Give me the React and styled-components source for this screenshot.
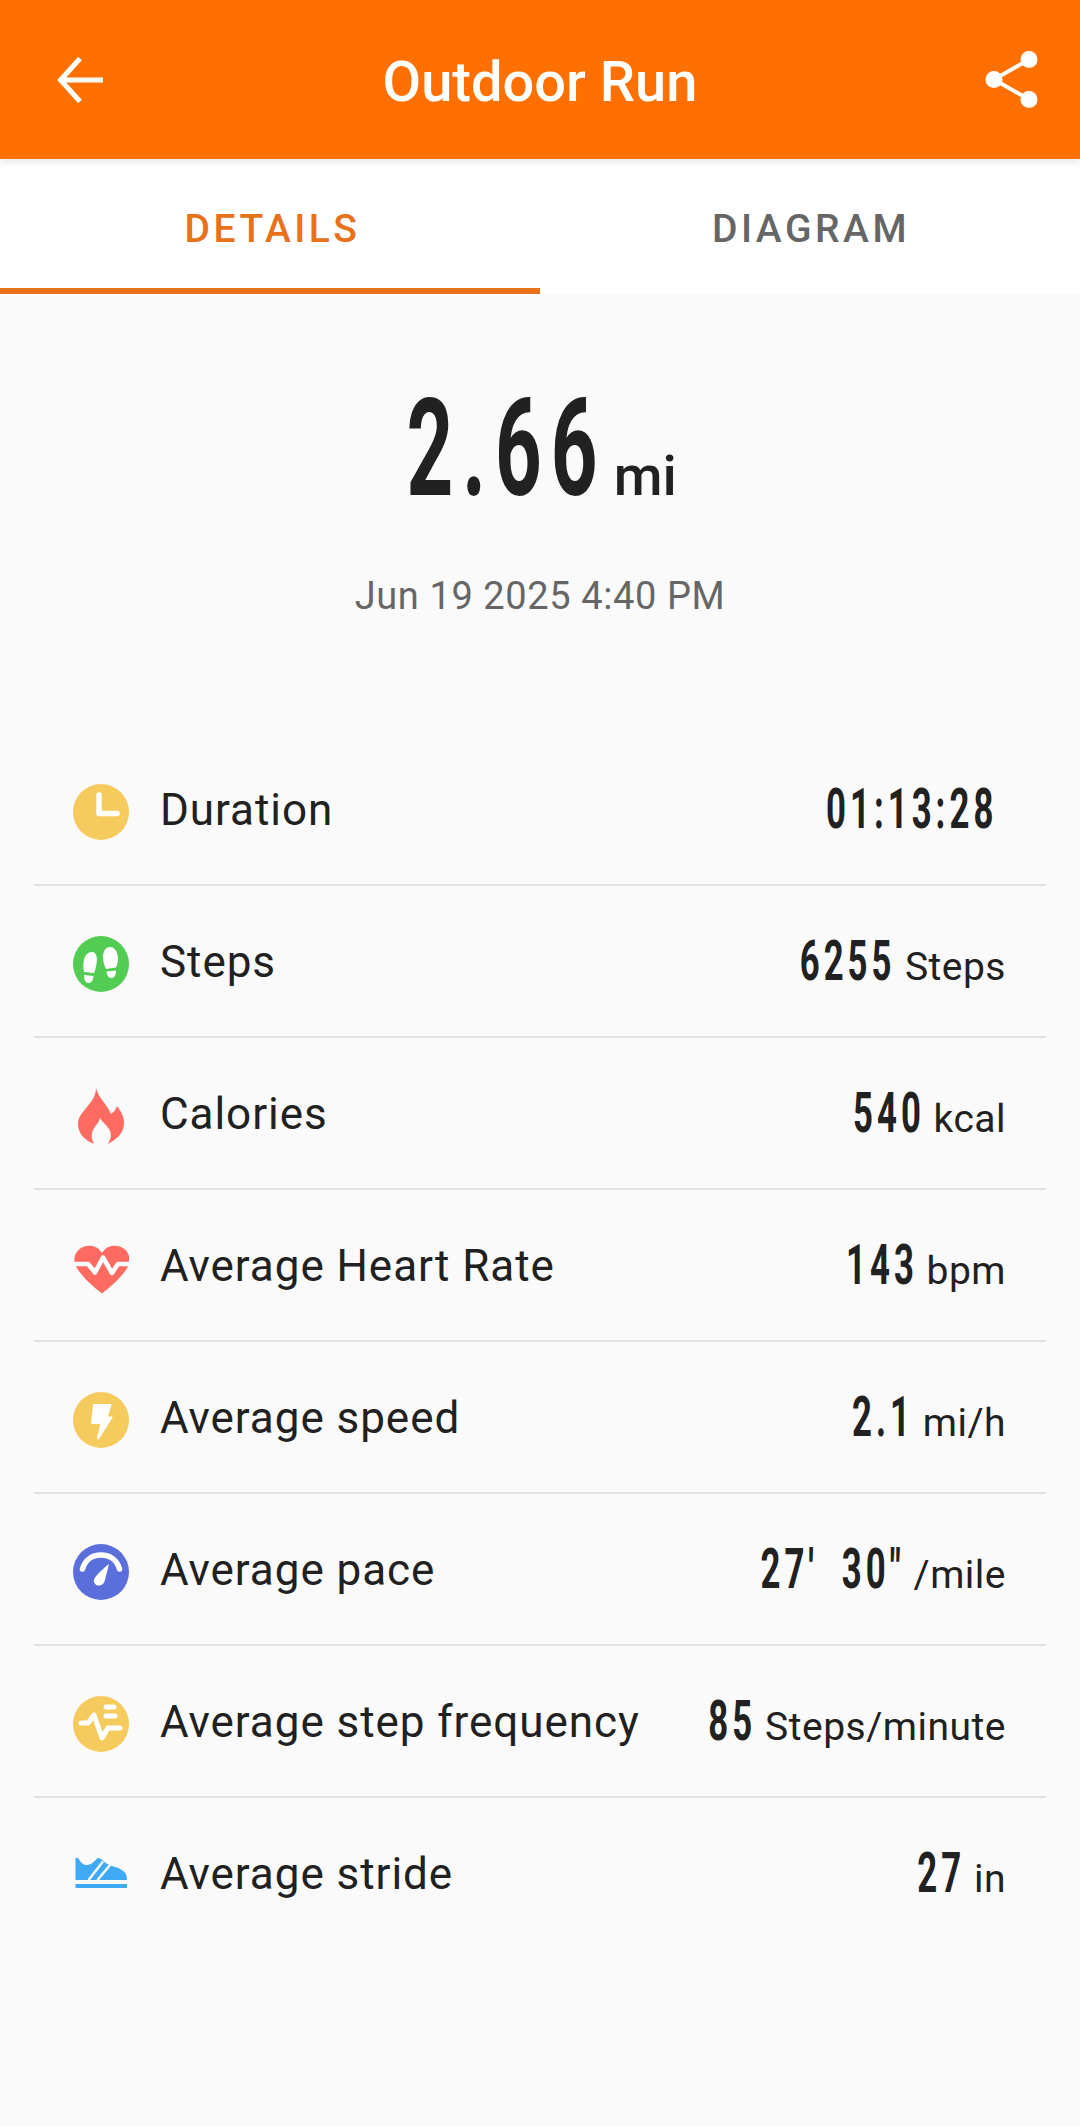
import React from "react";
import styled, { createGlobalStyle } from "styled-components";

const Global = createGlobalStyle`
  html, body { margin: 0; padding: 0; background: #fafafa; }
  body { font-family: Roboto, "Liberation Sans", sans-serif; -webkit-font-smoothing: antialiased; }
`;

const Page = styled.div`
  width: 1080px;
  height: 2126px;
  background: #fafafa;
  overflow: hidden;
  display: flex;
  flex-direction: column;
`;

const Header = styled.header`
  height: 159px;
  flex: none;
  background: #ff7000;
  display: flex;
  align-items: center;
  justify-content: space-between;
  padding: 0 42px 0 57px;
  box-shadow: 0 2px 8px rgba(0, 0, 0, 0.12);
  position: relative;
  z-index: 1;
  box-sizing: border-box;
`;

const Title = styled.h1`
  margin: 0 0 0 -8px;
  font-size: 56px;
  font-weight: 500;
  color: #fff;
  line-height: 1;
  padding-top: 5px;
`;

const Tabs = styled.nav`
  height: 135px;
  flex: none;
  display: grid;
  grid-template-columns: 1fr 1fr;
  background: #fff;
`;

const Tab = styled.div`
  display: flex;
  align-items: center;
  justify-content: center;
  box-sizing: border-box;
  padding-top: 10px;
  padding-left: ${(p) => (p.$active ? "5px" : "2px")};
  font-size: 39px;
  font-weight: 500;
  letter-spacing: 3.5px;
  color: ${(p) => (p.$active ? "#e8711a" : "#666666")};
  border-bottom: 6px solid ${(p) => (p.$active ? "#e8711a" : "transparent")};
`;

const Hero = styled.section`
  height: 440px;
  flex: none;
  box-sizing: border-box;
  padding-top: 82px;
  display: flex;
  flex-direction: column;
  align-items: center;
`;

const HeroValue = styled.div`
  display: flex;
  align-items: baseline;
  height: 146px;
  color: #212121;
`;

const Condensed = styled.span`
  display: inline-block;
  font-weight: 700;
  white-space: pre;
  transform-origin: right bottom;
  transform: scaleX(0.62);
`;

const HeroNumber = styled(Condensed)`
  font-size: 136px;
  line-height: 146px;
  letter-spacing: 15px;
  margin-left: -130px;
  transform: scaleX(0.6);
`;

const HeroUnit = styled.span`
  font-size: 56px;
  font-weight: 500;
  margin-left: 7px;
`;

const DateText = styled.div`
  font-size: 38px;
  color: #666666;
  margin-top: 52px;
  letter-spacing: 0.6px;
`;

const List = styled.ul`
  list-style: none;
  margin: 0;
  padding: 0 34px;
`;

const Row = styled.li`
  height: 152px;
  box-sizing: border-box;
  display: flex;
  align-items: center;
  border-bottom: 2px solid ${(p) => (p.$last ? "transparent" : "#e2e2e2")};
  padding: 0 40px 0 39px;
`;

const IconBox = styled.svg`
  width: 56px;
  height: 56px;
  flex: none;
  margin: 5px 31px 0 0;
`;

const Label = styled.span`
  font-size: 44px;
  color: #212121;
  letter-spacing: 0.95px;
  white-space: nowrap;
  padding-top: 2px;
`;

const Value = styled.span`
  margin-left: auto;
  display: flex;
  align-items: baseline;
  color: #212121;
  white-space: nowrap;
  margin-right: ${(p) => (p.$pad ? "9px" : "0")};
`;

const Number = styled(Condensed)`
  font-size: 56px;
  letter-spacing: 6.5px;
  margin-left: -70px;
`;

const Unit = styled.span`
  font-size: 39px;
  margin-left: 9px;
  letter-spacing: 0.5px;
`;

const Back = () => (
  <svg width="46" height="46" viewBox="0 0 46 46" fill="none" stroke="#fff" strokeWidth="5">
    <path d="M23 1.500 L3.500 23 L23 44.500 M3.500 23 H46" />
  </svg>
);

const Share = () => (
  <svg width="53" height="57" viewBox="0 0 53 57" fill="#fff" stroke="none">
    <circle cx="44" cy="8.500" r="8.500" />
    <circle cx="9" cy="28.500" r="8.500" />
    <circle cx="44" cy="48.500" r="8.500" />
    <path d="M44 8.500 L9 28.500 L44 48.500" fill="none" stroke="#fff" strokeWidth="4" />
  </svg>
);

const icons = {
  clock: (
    <>
      <circle cx="28" cy="28" r="28" fill="#f6cb5e" />
      <path d="M26 11 V29.500 H44" fill="none" stroke="#fff" strokeWidth="5.500" strokeLinecap="round" strokeLinejoin="round" />
    </>
  ),
  steps: (
    <>
      <circle cx="28" cy="28" r="28" fill="#52cc52" />
      <g fill="#fff">
        <path d="M19 16 C24 16 25 24 23 30 C22.500 33 22 35 21 37 L11 36 C10 31 10 28 11 24 C12 19 15 16 19 16 Z" />
        <path d="M11 39 L20.500 40 C20 45 18 47 15.500 47 C12.500 47 11 44 11 39 Z" />
        <path d="M37 11 C33 11 30 15 30 21 C30 25 31 29 33 33 L43 31.500 C45 27 45.500 23 44.500 19 C43.500 14 41 11 37 11 Z" />
        <path d="M33.500 35.500 L43 34.500 C43 39 41.500 42 38.500 42 C36 42 34 40 33.500 35.500 Z" />
      </g>
    </>
  ),
  flame: (
    <path fill="#ff6b60" d="M23 0 C25 8 30 12 34 19 C36 22 37 24 38 26 C41 24 43 21 44 18 C48 23 51 29 51 35 C51 45 44 51 35 56 C37 52 39 48 37 43 C35 38 30 35 27 30 C26 36 20 39 19 45 C18 49 19 52 21 56 C11 52 5 45 5 36 C5 29 9 25 14 19 C18 14 23 8 23 0 Z" />
  ),
  heart: (
    <g transform="translate(0 -1)">
      <path fill="#ff6b60" d="M29 14 C25 7 17 5 10 8 C3 11 0 18 2 25 C5 34 19 47 29 54.500 C39 47 53 34 56 25 C58 18 55 11 48 8 C41 5 33 7 29 14 Z" />
      <path fill="none" stroke="#fff" strokeWidth="4.500" strokeLinejoin="round" strokeLinecap="round" d="M2 25 H15 L22 33.500 L30 18.500 L39 34 L45 25 H56" />
    </g>
  ),
  bolt: (
    <>
      <circle cx="28" cy="28" r="28" fill="#f6cb5e" />
      <path fill="#fff" stroke="#fff" strokeWidth="2" strokeLinejoin="round" d="M21 13 H37.500 L33.500 25.500 H38.500 L25 46.500 L28.500 31 H19 Z" />
    </>
  ),
  gauge: (
    <>
      <circle cx="28" cy="28" r="28" fill="#5a6fdb" />
      <path d="M9.500 25 C12 16 19 11 28 11 C37 11 44 16 46.500 25" fill="none" stroke="#fff" strokeWidth="5.500" strokeLinecap="round" />
      <path fill="#fff" d="M36 20 L32 36 C31 40 28 42 25 41.500 C21.500 41 20 37.500 21.500 34.500 C24 30 31 24 36 20 Z" />
    </>
  ),
  pulse: (
    <>
      <circle cx="28" cy="28" r="28" fill="#f6cb5e" />
      <g fill="none" stroke="#fff" strokeWidth="5" strokeLinecap="round" strokeLinejoin="round">
        <path d="M8 27 H15 L21 19 L29 42 L35 32 H47" />
        <path d="M33 11 H41 M33 20 H42" />
      </g>
    </>
  ),
  shoe: (
    <g transform="translate(-1.500 -2.500)">
      <path fill="#3fa9f5" d="M4 12.500 C6 11.500 7 13 8 14.500 C10 18.500 13 20 16 19.500 C20 19 23 16 26 12.500 C28 12 30 14 33 16.500 C38 21 46 21 51 25 C54 27 55.500 30 55.500 34.500 H4 Z" />
      <rect x="4" y="38.500" width="51.500" height="4" fill="#3fa9f5" />
      <path d="M31.500 16 L17 34.500 M39 19 L26 34.500" fill="none" stroke="#fafafa" strokeWidth="2.500" />
    </g>
  ),
};

const rows = [
  { icon: "clock", label: "Duration", value: "01:13:28", pad: true },
  { icon: "steps", label: "Steps", value: "6255", unit: "Steps" },
  { icon: "flame", label: "Calories", value: "540", unit: "kcal" },
  { icon: "heart", label: "Average Heart Rate", value: "143", unit: "bpm" },
  { icon: "bolt", label: "Average speed", value: "2.1", unit: "mi/h" },
  { icon: "gauge", label: "Average pace", value: "27'\u2009 30\"", unit: "/mile" },
  { icon: "pulse", label: "Average step frequency", value: "85", unit: "Steps/minute" },
  { icon: "shoe", label: "Average stride", value: "27", unit: "in" },
];

export default function App() {
  return (
    <Page>
      <Global />
      <Header>
        <Back />
        <Title>Outdoor Run</Title>
        <Share />
      </Header>
      <Tabs>
        <Tab $active>DETAILS</Tab>
        <Tab>DIAGRAM</Tab>
      </Tabs>
      <Hero>
        <HeroValue>
          <HeroNumber>2.66</HeroNumber>
          <HeroUnit>mi</HeroUnit>
        </HeroValue>
        <DateText>Jun 19 2025 4:40 PM</DateText>
      </Hero>
      <List>
        {rows.map((r, i) => (
          <Row key={r.label} $last={i === rows.length - 1}>
            <IconBox viewBox="0 0 56 56">{icons[r.icon]}</IconBox>
            <Label>{r.label}</Label>
            <Value $pad={r.pad}>
              <Number>{r.value}</Number>
              {r.unit && <Unit>{r.unit}</Unit>}
            </Value>
          </Row>
        ))}
      </List>
    </Page>
  );
}
